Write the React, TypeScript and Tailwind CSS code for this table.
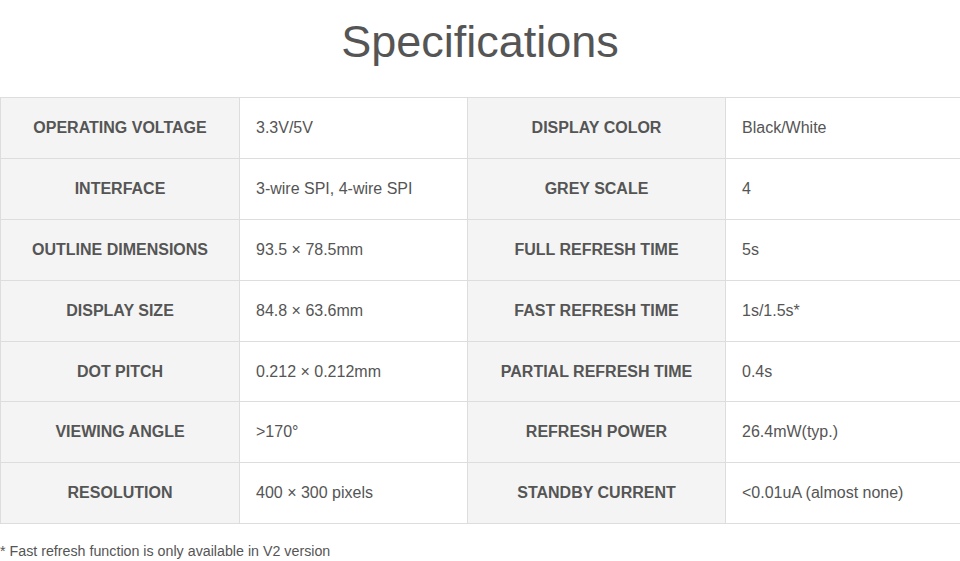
const SPECS = [
  ["OPERATING VOLTAGE", "3.3V/5V", "DISPLAY COLOR", "Black/White"],
  ["INTERFACE", "3-wire SPI, 4-wire SPI", "GREY SCALE", "4"],
  ["OUTLINE DIMENSIONS", "93.5 × 78.5mm", "FULL REFRESH TIME", "5s"],
  ["DISPLAY SIZE", "84.8 × 63.6mm", "FAST REFRESH TIME", "1s/1.5s*"],
  ["DOT PITCH", "0.212 × 0.212mm", "PARTIAL REFRESH TIME", "0.4s"],
  ["VIEWING ANGLE", ">170°", "REFRESH POWER", "26.4mW(typ.)"],
  ["RESOLUTION", "400 × 300 pixels", "STANDBY CURRENT", "<0.01uA (almost none)"],
]

export default function App() {
  return (
    <div className="w-[960px] bg-white text-[#555] font-['Liberation_Sans',Arial,sans-serif]">
      <div className="h-[97px] pb-[14px] flex items-center justify-center">
        <h1 className="text-[45px] leading-none">Specifications</h1>
      </div>

      <table className="w-[960px] border-collapse table-fixed text-[16px]">
        <colgroup>
          <col className="w-[239px]" />
          <col className="w-[228px]" />
          <col className="w-[258px]" />
          <col className="w-[235px]" />
        </colgroup>
        <tbody>
          {SPECS.map((row, i) => (
            <tr key={i} className={i === 4 ? "h-[60px]" : "h-[61px]"}>
              <td className="border border-[#ddd] bg-[#f4f4f4] text-center font-bold">{row[0]}</td>
              <td className="border border-[#ddd] pl-[16px]">{row[1]}</td>
              <td className="border border-[#ddd] bg-[#f4f4f4] text-center font-bold">{row[2]}</td>
              <td className="border border-[#ddd] pl-[16px]">{row[3]}</td>
            </tr>
          ))}
        </tbody>
      </table>

      <p className="mt-[17px] text-[14.25px] leading-[20px]">* Fast refresh function is only available in V2 version</p>
    </div>
  )
}
